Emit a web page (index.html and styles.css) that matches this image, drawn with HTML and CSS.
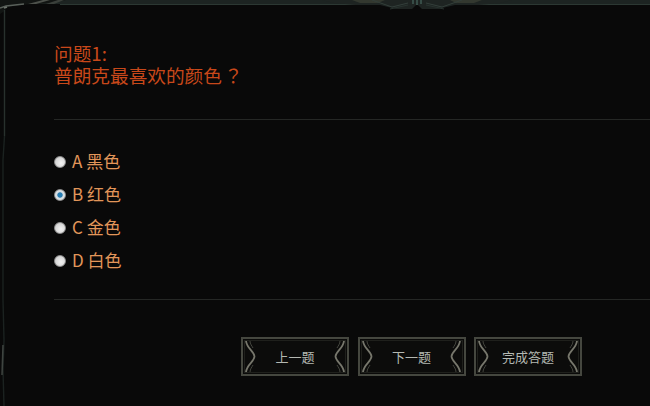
FILE: index.html
```html
<!DOCTYPE html>
<html lang="zh-CN">
<head>
    <meta charset="UTF-8">
    <meta name="viewport" content="width=device-width, initial-scale=1.0">
    <title>答题</title>
    <link rel="stylesheet" href="styles.css">
</head>
<body>
    <div class="frame">
        <!-- metal border drawn over the page edge -->
        <svg class="border-art" viewBox="0 0 650 406" width="650" height="406">
            <rect x="0" y="0" width="650" height="4" fill="#1d2422"/>
            <path d="M60 4.500H650" stroke="#2c3833" stroke-width="1"/>
            <path d="M0 0H66L50 3 20 5 8 7 3 12 0 14Z" fill="#121513"/>
            <path d="M0 8 6 6 24 4" fill="none" stroke="#59605a" stroke-width="1.500"/>
            <path d="M4.500 10V136" stroke="#28312d" stroke-width="1.400"/>
            <path d="M4 8 7 7" stroke="#6d746c" stroke-width="1.500"/>
            <path d="M28 4 43 0H50L36 4Z" fill="#4d514b"/>
            <path d="M46 4 58 0H64L54 4Z" fill="#3a3f3a"/>
            <path d="M4.500 136 3 160V300L4 340 3 370 4 406" fill="none" stroke="#1b2220" stroke-width="1.400"/>
            <path d="M3 345 2 375" stroke="#3f4440" stroke-width="1.500"/>
            <path d="M322 0H512L500 3 478 5 455 5 438 9 422 9 417 4 412 9 396 9 380 5 356 5 334 3Z" fill="#1e2422"/>
            <path d="M352 0H385L378 3H360ZM482 0H450L456 3H474Z" fill="#33382f"/>
            <path d="M372 0 392 7 408 3M462 0 442 7 426 3" fill="none" stroke="#333f3a"/>
            <path d="M390 9 408 5M444 9 426 5" fill="none" stroke="#28332f"/>
            <path d="M413 0V4M417 0V5M421 0V4" stroke="#4f746a"/>
        </svg>

        <main class="quiz">
            <h1 class="question">问题1:<br>普朗克最喜欢的颜色<span class="mark" lang="zh-TW">？</span></h1>
            <hr class="rule">
            <form class="options">
                <label class="option"><input type="radio" name="answer"> A 黑色</label>
                <label class="option"><input type="radio" name="answer" checked> B 红色</label>
                <label class="option"><input type="radio" name="answer"> C 金色</label>
                <label class="option"><input type="radio" name="answer"> D 白色</label>
            </form>
            <hr class="rule">
            <div class="actions">
                <button type="button" class="btn">
                    <svg class="cap" viewBox="0 0 12 31" width="12" height="31"><path d="M1 0C2 8 9 10 9.500 15.500 9 21 2 23 1 31" fill="none" stroke="#77776c" stroke-width="1.800"/><path d="M5 0C5 3 7 5 8 7M5 31C5 28 7 26 8 24" fill="none" stroke="#45463f"/></svg>
                    <span>上一题</span>
                    <svg class="cap flip" viewBox="0 0 12 31" width="12" height="31"><path d="M1 0C2 8 9 10 9.500 15.500 9 21 2 23 1 31" fill="none" stroke="#77776c" stroke-width="1.800"/><path d="M5 0C5 3 7 5 8 7M5 31C5 28 7 26 8 24" fill="none" stroke="#45463f"/></svg>
                </button>
                <button type="button" class="btn">
                    <svg class="cap" viewBox="0 0 12 31" width="12" height="31"><path d="M1 0C2 8 9 10 9.500 15.500 9 21 2 23 1 31" fill="none" stroke="#77776c" stroke-width="1.800"/><path d="M5 0C5 3 7 5 8 7M5 31C5 28 7 26 8 24" fill="none" stroke="#45463f"/></svg>
                    <span>下一题</span>
                    <svg class="cap flip" viewBox="0 0 12 31" width="12" height="31"><path d="M1 0C2 8 9 10 9.500 15.500 9 21 2 23 1 31" fill="none" stroke="#77776c" stroke-width="1.800"/><path d="M5 0C5 3 7 5 8 7M5 31C5 28 7 26 8 24" fill="none" stroke="#45463f"/></svg>
                </button>
                <button type="button" class="btn">
                    <svg class="cap" viewBox="0 0 12 31" width="12" height="31"><path d="M1 0C2 8 9 10 9.500 15.500 9 21 2 23 1 31" fill="none" stroke="#77776c" stroke-width="1.800"/><path d="M5 0C5 3 7 5 8 7M5 31C5 28 7 26 8 24" fill="none" stroke="#45463f"/></svg>
                    <span>完成答题</span>
                    <svg class="cap flip" viewBox="0 0 12 31" width="12" height="31"><path d="M1 0C2 8 9 10 9.500 15.500 9 21 2 23 1 31" fill="none" stroke="#77776c" stroke-width="1.800"/><path d="M5 0C5 3 7 5 8 7M5 31C5 28 7 26 8 24" fill="none" stroke="#45463f"/></svg>
                </button>
            </div>
        </main>
    </div>
</body>
</html>
```

FILE: styles.css
```css
* {
    box-sizing: border-box;
}

html, body {
    margin: 0;
    padding: 0;
    height: 100%;
}

body {
    background: #090909;
    font-family: "Noto Sans CJK SC", sans-serif;
    overflow: hidden;
}

.frame {
    position: relative;
    width: 650px;
    height: 406px;
    overflow: hidden;
}

.border-art {
    position: absolute;
    top: 0;
    left: 0;
    display: block;
}

.quiz {
    padding: 42px 0 0 54px;
}

.question {
    margin: 0;
    font-size: 18.670px;
    font-weight: normal;
    line-height: 22px;
    color: #c8481a;
}

.mark {
    font-family: "Noto Sans CJK TC", sans-serif;
    margin-left: 2px;
}

.rule {
    height: 1px;
    margin: 0;
    border: 0;
    background: #252725;
}

.question + .rule {
    margin-top: 33px;
}

.options {
    display: flex;
    flex-direction: column;
    gap: 11px;
    padding: 30px 0 28px;
}

.option {
    display: flex;
    align-items: center;
    gap: 6px;
    height: 22px;
    padding-bottom: 2px;
    font-size: 17px;
    color: #e2965a;
}

.option input {
    appearance: none;
    width: 12px;
    height: 12px;
    margin: 4px 0 0;
    border: 1px solid #8e8e8e;
    border-radius: 50%;
    background: radial-gradient(circle at 60% 60%, #f2f2f2 0, #d8d8d8 60%, #bcbcbc 100%);
}

.option input:checked {
    background: radial-gradient(circle, #1f7fb8 0, #2a7cb0 32%, #d4dde2 44%, #e4e4e4 100%);
}

.actions {
    display: flex;
    gap: 8.500px;
    padding: 37px 0 0 187px;
}

.btn {
    display: flex;
    align-items: center;
    justify-content: space-between;
    width: 108px;
    height: 39px;
    padding: 2px;
    font-family: inherit;
    font-size: 13px;
    color: #b4b8b2;
    background: #0c0c0b;
    border: 2px solid #45473f;
    box-shadow: inset 0 0 0 1px #0a0a09, inset 0 0 0 2px #1f201c;
}

.cap {
    display: block;
    flex: none;
}

.flip {
    transform: scaleX(-1);
}
```
